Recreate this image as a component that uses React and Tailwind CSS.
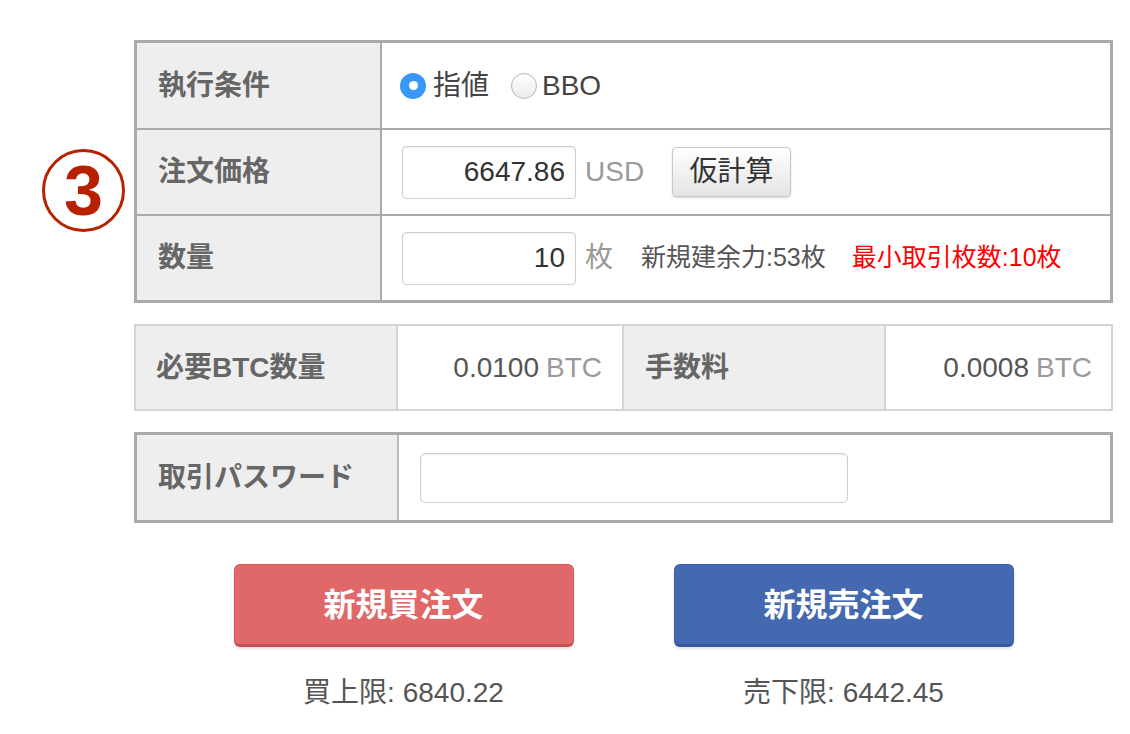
import React from 'react';

const font = { fontFamily: '"Liberation Sans", "Noto Sans CJK JP", sans-serif' };

function Radio({ checked }) {
  if (checked) {
    return (
      <span className="shrink-0 w-[26px] h-[26px] rounded-full bg-[#3a97f9] flex items-center justify-center">
        <span className="w-[9px] h-[9px] rounded-full bg-white" />
      </span>
    );
  }
  return <span className="shrink-0 block w-[26px] h-[26px] rounded-full border border-[#b5b5b5] bg-gradient-to-b from-white to-[#ececec]" />;
}

function NumBox({ value }) {
  return (
    <input
      readOnly
      value={value}
      className="w-[174px] h-[53px] border border-[#cfcfcf] rounded-[4px] shadow-[inset_0_1px_2px_rgba(0,0,0,0.08)] text-right pr-[10px] text-[28px] text-[#333] outline-none bg-white"
      style={font}
    />
  );
}

export default function App() {
  return (
    <div className="w-[1130px] h-[734px] bg-white flex pl-[42px] pt-[40px]" style={font}>
      {/* circled step number */}
      <div className="w-[83px] h-[83px] mt-[109px] mr-[9px] rounded-full border-[3px] border-[#b82100] flex items-center justify-center text-[#b82100] text-[70px] font-bold leading-none">
        3
      </div>

      <div className="w-[979px] flex flex-col">
        {/* order conditions */}
        <div className="border-[3px] border-[#aaa]">
          <div className="flex h-[85px]">
            <div className="w-[245px] bg-[#eee] border-r-2 border-[#aaa] flex items-center pl-[21px] text-[28px] font-bold text-[#666]">執行条件</div>
            <div className="flex items-center pl-[18px] text-[28px] text-[#444]">
              <Radio checked />
              <span className="ml-[7px]">指値</span>
              <span className="ml-[22px]"><Radio /></span>
              <span className="ml-[5px]">BBO</span>
            </div>
          </div>
          <div className="flex h-[86px] border-t-2 border-[#aaa]">
            <div className="w-[245px] bg-[#eee] border-r-2 border-[#aaa] flex items-center pl-[21px] text-[28px] font-bold text-[#666]">注文価格</div>
            <div className="flex items-center pl-[20px]">
              <NumBox value="6647.86" />
              <span className="ml-[9px] text-[28px] text-[#999]">USD</span>
              <button className="ml-[28px] w-[119px] h-[50px] border border-[#c8c8c8] rounded-[4px] bg-gradient-to-b from-white to-[#e4e4e4] shadow-[0_1px_2px_rgba(0,0,0,0.15)] text-[28px] text-[#333]">仮計算</button>
            </div>
          </div>
          <div className="flex h-[86px] border-t-2 border-[#aaa]">
            <div className="w-[245px] bg-[#eee] border-r-2 border-[#aaa] flex items-center pl-[21px] text-[28px] font-bold text-[#666]">数量</div>
            <div className="flex items-center pl-[20px]">
              <NumBox value="10" />
              <span className="ml-[9px] text-[28px] text-[#999]">枚</span>
              <span className="ml-[28px] text-[25px] text-[#555]">新規建余力:53枚</span>
              <span className="ml-[26px] text-[25px] text-[#f00]">最小取引枚数:10枚</span>
            </div>
          </div>
        </div>

        {/* required amount / fee */}
        <div className="mt-[21px] border-2 border-[#d4d4d4] h-[87px] flex">
          <div className="w-[260px] bg-[#eee] flex items-center pl-[20px] text-[28px] font-bold text-[#666]">必要BTC数量</div>
          <div className="w-[226px] border-l-2 border-[#d4d4d4] flex items-center justify-end pr-[20px] text-[28px] text-[#555]">
            0.0100<span className="ml-[7px] text-[#999]">BTC</span>
          </div>
          <div className="w-[262px] bg-[#eee] border-l-2 border-[#d4d4d4] flex items-center pl-[21px] text-[28px] font-bold text-[#666]">手数料</div>
          <div className="flex-1 border-l-2 border-[#d4d4d4] flex items-center justify-end pr-[19px] text-[28px] text-[#555]">
            0.0008<span className="ml-[7px] text-[#999]">BTC</span>
          </div>
        </div>

        {/* trade password */}
        <div className="mt-[21px] border-[3px] border-[#aaa] h-[91px] flex">
          <div className="w-[262px] bg-[#eee] border-r-2 border-[#bbb] flex items-center pl-[21px] text-[28px] font-bold text-[#666]">取引パスワード</div>
          <div className="flex items-center pl-[21px]">
            <input type="password" className="w-[428px] h-[50px] border border-[#cfcfcf] rounded-[5px] shadow-[inset_0_1px_2px_rgba(0,0,0,0.08)] outline-none" />
          </div>
        </div>

        {/* order buttons */}
        <div className="mt-[41px] flex justify-center gap-[100px]">
          <div className="flex flex-col items-center">
            <button className="w-[340px] h-[83px] rounded-[6px] bg-[#e06868] border border-[#d55a5a] border-b-[3px] border-b-[#c45252] text-white text-[32px] font-bold shadow-[0_2px_3px_rgba(0,0,0,0.12)]">新規買注文</button>
            <div className="mt-[25px] text-[28px] text-[#555]">買上限: 6840.22</div>
          </div>
          <div className="flex flex-col items-center">
            <button className="w-[340px] h-[83px] rounded-[6px] bg-[#4469b1] border border-[#3d60a5] border-b-[3px] border-b-[#36589a] text-white text-[32px] font-bold shadow-[0_2px_3px_rgba(0,0,0,0.12)]">新規売注文</button>
            <div className="mt-[25px] text-[28px] text-[#555]">売下限: 6442.45</div>
          </div>
        </div>
      </div>
    </div>
  );
}
